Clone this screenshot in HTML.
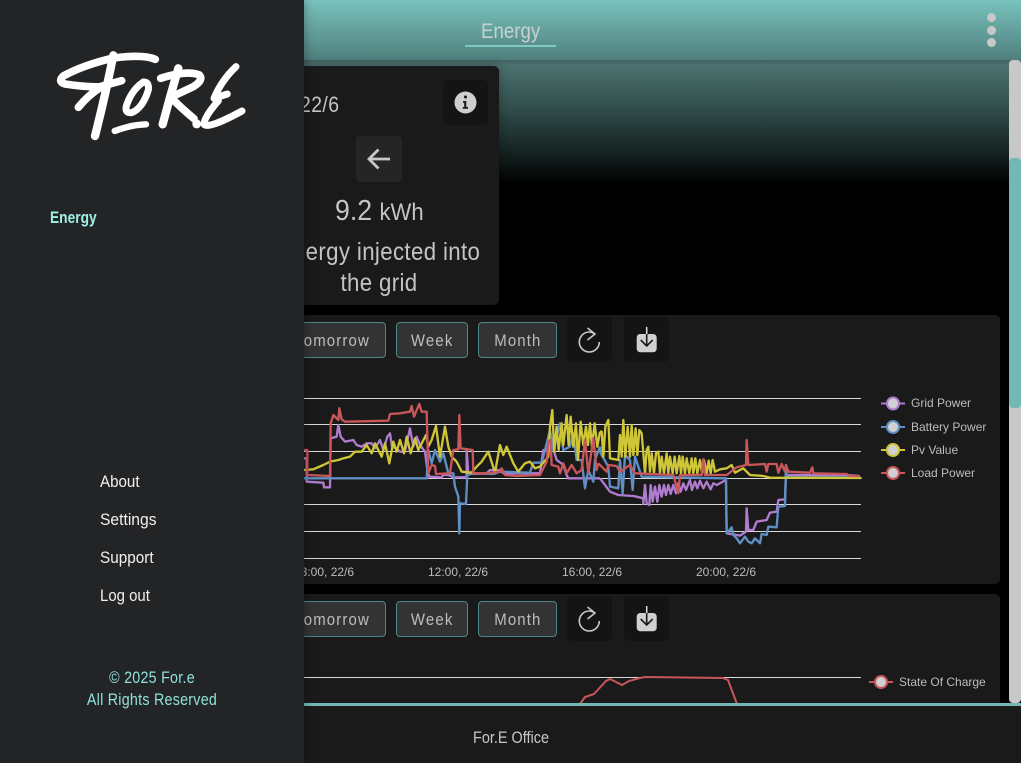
<!DOCTYPE html>
<html><head><meta charset="utf-8"><style>
html,body{margin:0;padding:0;width:1021px;height:763px;overflow:hidden;background:#000}
body{position:relative;font-family:"Liberation Sans",sans-serif}
.a{position:absolute;white-space:nowrap}
.t{position:absolute;white-space:nowrap;line-height:1;transform-origin:0 50%}
.btn{position:absolute;box-sizing:border-box;height:36px;background:#333;border:1px solid #4c8685;border-radius:4px;color:#bdbdbd;font-size:17px;letter-spacing:1.3px;text-align:center;line-height:36px}
.btn span{display:inline-block;transform:scaleX(.88)}
.ib{position:absolute;width:45px;height:45px;background:#141415;border-radius:5px}
.ax{position:absolute;font:12px/14px "Liberation Sans",sans-serif;color:#bcbcbc;white-space:nowrap}
</style></head><body>
<div class="a" style="left:0;top:60px;width:1021px;height:125px;background:linear-gradient(#4f7673,#2f4c4a 40%,#0c1413 85%,#000)"></div>
<div class="a" style="left:0;top:0;width:1021px;height:60px;background:linear-gradient(#79c2bd,#4f7f7c);box-shadow:0 2px 4px rgba(0,0,0,.2)"></div>
<div class="t" style="left:481px;top:21px;font-size:21px;color:#c6d2cf;transform:scaleX(.89)">Energy</div>
<div class="a" style="left:465px;top:45px;width:91px;height:2px;background:#7fc9c4"></div>
<div class="a" style="left:986.500px;top:13px;width:9px;height:9px;border-radius:50%;background:#c8c8c8"></div>
<div class="a" style="left:986.500px;top:25.500px;width:9px;height:9px;border-radius:50%;background:#c8c8c8"></div>
<div class="a" style="left:986.500px;top:38px;width:9px;height:9px;border-radius:50%;background:#c8c8c8"></div>

<div class="a" style="left:1009px;top:60px;width:12px;height:643px;background:#c8c8c8;border-radius:4px"></div>
<div class="a" style="left:1009px;top:158px;width:12px;height:250px;background:#73b8b5;border-radius:4px"></div>

<!-- info card -->
<div class="a" style="left:250px;top:66px;width:249px;height:239px;background:#1a1a1a;border-radius:5px;box-shadow:0 0 10px rgba(0,0,0,.3)"></div>
<div class="t" style="left:300px;top:94px;font-size:22px;color:#c4c4c4;transform:scaleX(.88);letter-spacing:.5px">22/6</div>
<div class="ib" style="left:443px;top:80px"></div>
<svg class="a" style="left:454px;top:91px" width="23" height="23" viewBox="0 0 23 23"><circle cx="11.5" cy="11.5" r="11" fill="#cfcfcf"/><rect x="10" y="4.5" width="3" height="3" rx="1.2" fill="#1a1a1a"/><path d="M9 10h3.3v6H14v1.8H8.8V16h1.4v-4.2H9z" fill="#1a1a1a"/></svg>
<div class="a" style="left:356px;top:136px;width:46px;height:46px;background:#252525;border-radius:4px"></div>
<svg class="a" style="left:356px;top:136px" width="46" height="46" viewBox="0 0 46 46"><path d="M34 23H13M22.500 13.500l-9.500 9.500 9.500 9.500" fill="none" stroke="#c8c8c8" stroke-width="2.800"/></svg>
<div class="t" style="left:335px;top:197px;font-size:29px;color:#c4c4c4;transform:scaleX(.92)">9.2 <span style="font-size:24px">kWh</span></div>
<div class="a" style="left:229px;top:237px;width:300px;text-align:center;font-size:25px;line-height:31px;color:#c4c4c4;letter-spacing:.4px;transform:scaleX(.89)">Energy injected into<br>the grid</div>

<!-- chart card 1 -->
<div class="a" style="left:250px;top:315px;width:750px;height:269px;background:#1a1a1a;border-radius:5px"></div>
<div class="btn" style="left:280px;top:322px;width:106px"><span>Tomorrow</span></div>
<div class="btn" style="left:396px;top:322px;width:72px"><span>Week</span></div>
<div class="btn" style="left:478px;top:322px;width:79px"><span>Month</span></div>
<div class="ib" style="left:567px;top:317px"></div>
<svg class="a" style="left:567px;top:317px" width="45" height="45" viewBox="0 0 45 45"><path d="M32.300 25A10 10 0 1 1 22.300 15Q25 15 27.500 17M20.500 11l7.500 6-7.500 6" fill="none" stroke="#c8c8c8" stroke-width="1.600"/></svg>
<div class="ib" style="left:624px;top:317px"></div>
<svg class="a" style="left:624px;top:317px" width="45" height="45" viewBox="0 0 45 45"><rect x="12.700" y="17" width="20" height="18.300" rx="3.500" fill="#d0d0d0"/><path d="M22.700 10v7" stroke="#dcdcdc" stroke-width="1.500"/><path d="M22.700 17v12M16.700 23l6 6 6-6" fill="none" stroke="#1a1a1a" stroke-width="1.600"/></svg>

<!-- chart card 2 -->
<div class="a" style="left:250px;top:594px;width:750px;height:120px;background:#1a1a1a;border-radius:5px"></div>
<div class="btn" style="left:280px;top:601px;width:106px"><span>Tomorrow</span></div>
<div class="btn" style="left:396px;top:601px;width:72px"><span>Week</span></div>
<div class="btn" style="left:478px;top:601px;width:79px"><span>Month</span></div>
<div class="ib" style="left:567px;top:596px"></div>
<svg class="a" style="left:567px;top:596px" width="45" height="45" viewBox="0 0 45 45"><path d="M32.300 25A10 10 0 1 1 22.300 15Q25 15 27.500 17M20.500 11l7.500 6-7.500 6" fill="none" stroke="#c8c8c8" stroke-width="1.600"/></svg>
<div class="ib" style="left:624px;top:596px"></div>
<svg class="a" style="left:624px;top:596px" width="45" height="45" viewBox="0 0 45 45"><rect x="12.700" y="17" width="20" height="18.300" rx="3.500" fill="#d0d0d0"/><path d="M22.700 10v7" stroke="#dcdcdc" stroke-width="1.500"/><path d="M22.700 17v12M16.700 23l6 6 6-6" fill="none" stroke="#1a1a1a" stroke-width="1.600"/></svg>

<!-- charts -->
<svg class="a" style="left:0;top:0" width="1021" height="763" viewBox="0 0 1021 763">
<g stroke="#d9d9d9" stroke-width="1"><path d="M290 398.500H861M290 424.500H861M290 451.500H861M290 478.500H861M290 504.500H861M290 531.500H861M290 558.500H861M290 677.500H861"/></g>
<g fill="none" stroke-width="7" stroke-linejoin="round" transform="translate(300 390) scale(.3333)">
<polyline stroke="#b07cd0" points="12,205 20,205 20,275 70,278 72,292 90,292 92,145 110,140 115,105 122,140 135,155 160,150 170,165 185,170 200,160 215,160 225,175 240,150 250,180 262,140 270,130 276,170 290,175 300,185 315,185 330,115 340,170 350,140 360,165 375,185 382,240 388,260 425,262 430,255 445,255 460,262 500,262 500,180 505,250 520,252 560,250 570,240 600,240 610,250 650,250 720,250 730,180 745,180 755,160 770,210 790,225 800,255 805,265 860,265 880,265 900,265"/>
<polyline stroke="#5f8fc4" points="12,265 380,265 385,180 395,220 405,180 420,215 430,190 445,250 460,250 465,290 475,320 478,430 480,340 498,342 502,255 520,250 580,252 600,245 690,248 700,218 725,218 730,200 750,120 760,180 780,100 790,180 810,170 820,130 830,210 845,210 855,295 865,240 880,275 885,210 900,170"/>
<polyline stroke="#cfc637" points="12,240 40,238 70,225 90,215 115,210 130,205 150,200 165,185 185,185 200,165 215,190 225,160 245,200 255,160 268,220 280,155 290,185 300,150 312,190 320,140 332,190 345,145 355,180 378,135 385,170 395,150 408,108 420,200 435,110 445,170 455,200 470,215 485,245 515,248 530,230 545,215 565,185 585,248 600,165 610,195 620,170 640,220 655,245 675,220 690,215 705,235 720,230 745,200 750,110 757,60 763,185 770,110 776,180 785,100 790,165 800,75 806,165 812,80 820,170 828,100 834,210 842,95 850,165 858,110 864,165 870,100 876,170 884,100 892,170 900,125"/>
<polyline stroke="#c9565a" points="12,180 22,180 22,255 90,258 92,100 100,75 115,90 118,55 125,88 135,95 265,92 270,72 300,70 330,65 335,48 342,80 348,65 358,42 365,65 380,65 385,250 395,225 405,228 408,252 450,250 460,180 475,178 478,75 482,175 518,180 520,250 560,250 600,245 605,235 615,255 650,258 720,255 740,215 745,155 752,150 755,225 775,230 780,250 790,220 800,250 815,225 830,250 845,240 855,150 865,250 880,145 890,240 895,220"/>
</g>
<g fill="none" stroke-width="7" stroke-linejoin="round" transform="translate(580 390) scale(.3333)">
<polyline stroke="#b07cd0" points="60,265 90,305 115,315 160,318 190,325 190,342 195,285 200,340 208,345 212,285 218,335 225,290 232,335 238,285 245,320 252,285 258,315 265,285 272,312 280,285 288,310 295,280 302,305 310,280 318,300 330,270 336,300 345,275 352,295 360,272 370,295 380,275 392,298 400,280 410,285 438,270 440,430 480,437 498,425 500,355 505,420 520,420 530,395 560,390 570,368 590,365 595,330 615,328 618,255 800,255 840,258"/>
<polyline stroke="#5f8fc4" points="60,170 62,190 85,230 90,290 115,295 120,210 128,310 135,195 150,210 158,300 165,200 185,260 430,265 438,265 440,430 455,412 460,435 470,445 480,460 495,440 505,455 515,460 525,445 540,460 545,432 560,435 565,410 590,412 595,350 615,348 618,225 620,262 840,262"/>
<polyline stroke="#cfc637" points="60,125 65,125 70,200 76,110 85,90 90,205 115,210 120,135 125,200 130,90 136,200 143,110 150,200 155,105 160,195 167,115 172,195 178,120 185,130 195,250 200,180 205,170 210,245 215,190 222,250 228,190 235,185 240,248 245,200 252,250 260,190 265,250 270,200 278,250 284,200 290,250 298,198 303,250 308,200 315,250 320,205 328,250 335,205 340,250 346,205 352,250 360,210 366,250 372,210 380,250 386,212 392,250 398,210 405,245 420,238 440,235 455,225 465,248 480,240 490,235 510,255 550,258 570,263 845,264"/>
<polyline stroke="#c9565a" points="55,220 80,245 85,225 110,228 120,245 150,225 165,250 280,255 295,310 300,255 365,255 370,208 375,255 440,255 470,232 498,225 500,150 505,225 555,222 560,245 565,222 590,222 595,248 605,222 615,245 618,225 625,245 690,248 697,232 700,250 800,252 810,258 840,258"/>
</g>
<polyline fill="none" stroke="#c9565a" stroke-width="2" points="580,704 585,697 594,694 606,681 610,679 622,685 629,681 640,678 645,677 723,678 728,680 737,704"/>
<g stroke-width="2">
<path d="M881 403.500H905" stroke="#b07cd0"/><circle cx="893" cy="403.500" r="6" fill="#d0d0d0" stroke="#b07cd0"/>
<path d="M881 427H905" stroke="#5f8fc4"/><circle cx="893" cy="427" r="6" fill="#d0d0d0" stroke="#5f8fc4"/>
<path d="M881 450H905" stroke="#cfc637"/><circle cx="893" cy="450" r="6" fill="#d0d0d0" stroke="#cfc637"/>
<path d="M881 473H905" stroke="#c9565a"/><circle cx="893" cy="473" r="6" fill="#d0d0d0" stroke="#c9565a"/>
<path d="M869 682H893" stroke="#c9565a"/><circle cx="881" cy="682" r="6" fill="#d0d0d0" stroke="#c9565a"/>
</g>
</svg>
<div class="ax" style="left:911px;top:396px">Grid Power</div>
<div class="ax" style="left:911px;top:420px">Battery Power</div>
<div class="ax" style="left:911px;top:443px">Pv Value</div>
<div class="ax" style="left:911px;top:466px">Load Power</div>
<div class="ax" style="left:899px;top:675px">State Of Charge</div>
<div class="ax" style="left:294px;top:565px">08:00, 22/6</div>
<div class="ax" style="left:428px;top:565px">12:00, 22/6</div>
<div class="ax" style="left:562px;top:565px">16:00, 22/6</div>
<div class="ax" style="left:696px;top:565px">20:00, 22/6</div>

<!-- footer -->
<div class="a" style="left:0;top:703px;width:1021px;height:3px;background:#73b8b5"></div>
<div class="a" style="left:0;top:706px;width:1021px;height:57px;background:#1a1a1a"></div>
<div class="t" style="left:473px;top:729px;font-size:17px;color:#c8c8c8;transform:scaleX(.85)">For.E Office</div>

<!-- sidebar -->
<div class="a" style="left:0;top:0;width:304px;height:763px;background:#232426;box-shadow:2px 0 8px rgba(0,0,0,.25)"></div>
<svg class="a" style="left:0;top:30px" width="300" height="120" viewBox="0 0 900 360" role="img" aria-label="For.E">
<g fill="none" stroke="#fff" stroke-width="23" stroke-linecap="round" stroke-linejoin="round">
<path d="M466 88Q430 72 340 84Q250 105 190 138Q172 155 195 162Q260 172 300 170L365 152"/>
<path d="M340 76Q315 200 285 318" stroke-width="25"/>
<path d="M235 232Q265 195 305 170"/>
<path d="M430 156Q395 180 380 225Q372 250 395 248Q428 235 445 180Q448 155 430 156z" stroke-width="21"/>
<path d="M344 303Q390 285 438 283" stroke-width="19"/>
<path d="M535 115Q510 200 488 283" stroke-width="25"/>
<path d="M482 145Q560 120 598 135Q612 150 580 170L512 202Q550 240 582 266"/>
<path d="M590 281v1" stroke-width="26"/>
<path d="M708 110Q665 150 642 205L682 192" stroke-width="21"/>
<path d="M655 212Q612 262 612 283Q625 298 726 243" stroke-width="21"/>
</g></svg>
<div class="t" style="left:50px;top:209px;font-size:17px;font-weight:bold;color:#9ff0e6;transform:scaleX(.81)">Energy</div>
<div class="t" style="left:100px;top:473px;font-size:17px;color:#f0f0f0;transform:scaleX(.89)">About</div>
<div class="t" style="left:100px;top:511px;font-size:17px;color:#f0f0f0;transform:scaleX(.92)">Settings</div>
<div class="t" style="left:100px;top:549px;font-size:17px;color:#f0f0f0;transform:scaleX(.9)">Support</div>
<div class="t" style="left:100px;top:587px;font-size:17px;color:#f0f0f0;transform:scaleX(.88)">Log out</div>
<div class="a" style="left:0;top:667px;width:304px;text-align:center;font-size:17px;line-height:22px;color:#8fe0da;letter-spacing:.3px;transform:scaleX(.84)">© 2025 For.e<br>All Rights Reserved</div>
</body></html>
